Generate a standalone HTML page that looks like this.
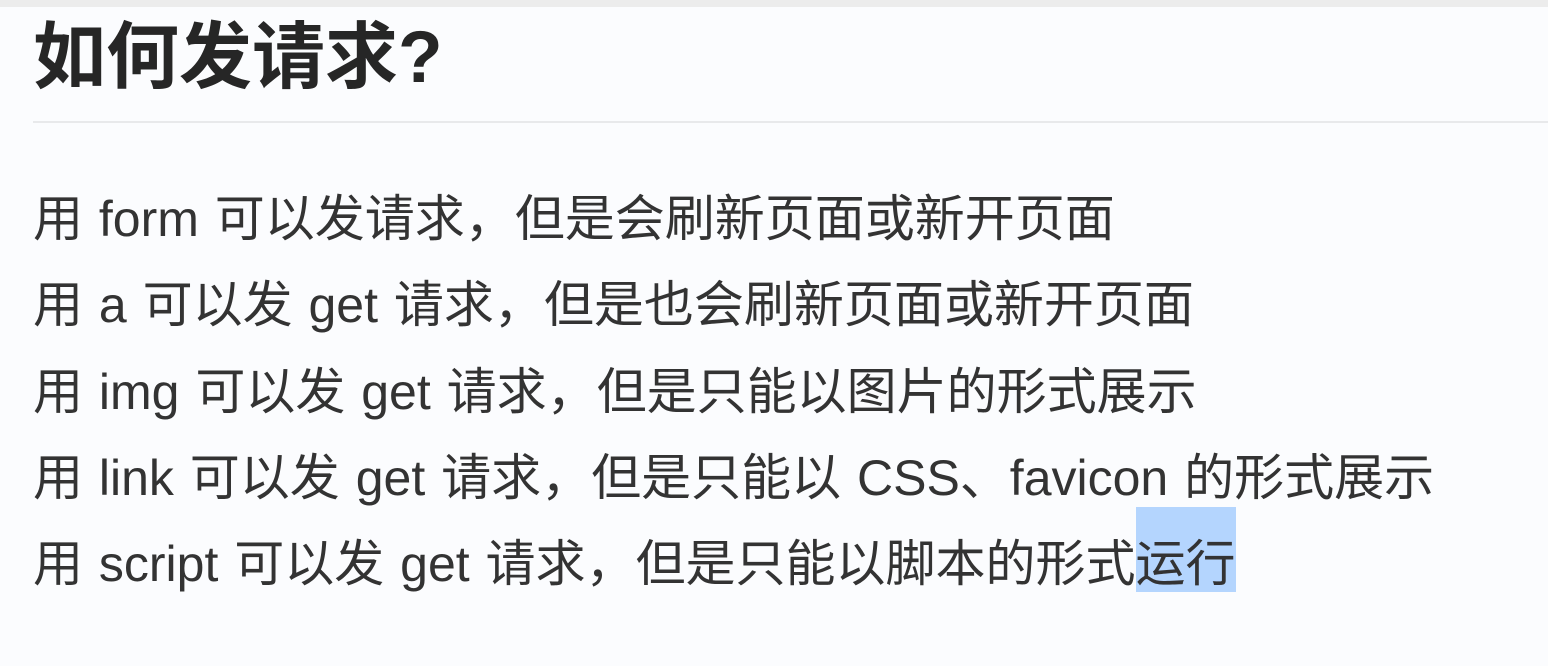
<!DOCTYPE html>
<html><head><meta charset="utf-8"><style>
html,body{margin:0;padding:0;}
body{width:1548px;height:666px;background:#fbfcfe;overflow:hidden;position:relative;font-family:"Liberation Sans","Noto Sans CJK SC",sans-serif;}
.top{position:absolute;left:0;top:0;width:1548px;height:7px;background:#ececec;}
h1{position:absolute;left:33px;top:18px;margin:0;font-size:73px;line-height:80px;font-weight:bold;color:#262626;}
.hr{position:absolute;left:33px;right:0;top:121px;height:2px;background:#e8e9eb;}
.body{position:absolute;left:33px;top:176px;font-size:50px;line-height:86.3px;color:#333;white-space:nowrap;word-spacing:2px;}
.hl{background:#b4d5fe;display:inline-block;line-height:86px;vertical-align:top;position:relative;top:-14px;padding-top:14px;height:71px;}
</style></head><body>
<div class="top"></div>
<h1>如何发请求?</h1>
<div class="hr"></div>
<div class="body">
<div>用 form 可以发请求，但是会刷新页面或新开页面</div>
<div>用 a 可以发 get 请求，但是也会刷新页面或新开页面</div>
<div>用 img 可以发 get 请求，但是只能以图片的形式展示</div>
<div>用 link 可以发 get 请求，但是只能以 CSS、favicon 的形式展示</div>
<div>用 script 可以发 get 请求，但是只能以脚本的形式<span class="hl">运行</span></div>
</div>
</body></html>
